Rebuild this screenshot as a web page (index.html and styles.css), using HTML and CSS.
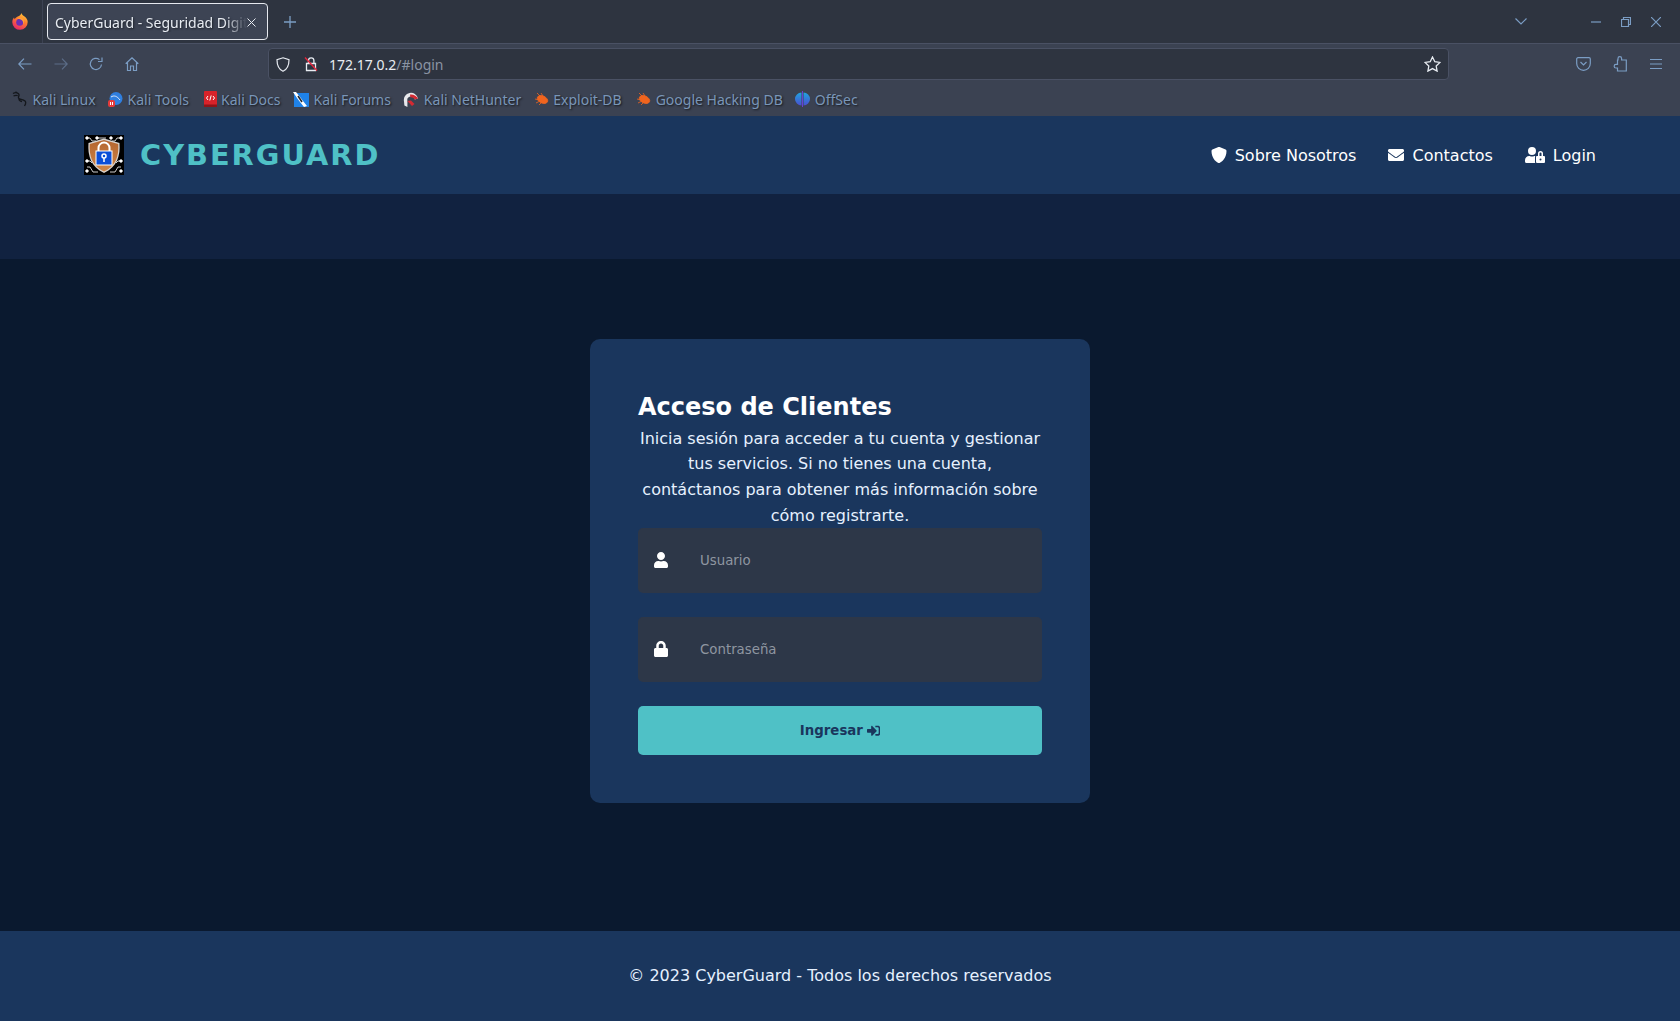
FILE: index.html
```html
<!DOCTYPE html>
<html lang="es">
<head>
  <meta charset="UTF-8">
  <title>CyberGuard - Seguridad Digital</title>
  <link rel="stylesheet" href="styles.css">
</head>
<body>
  <div class="browser">
    <div class="tabbar">
      <div class="fx-slot">
        <svg width="16" height="17" viewBox="0 0 16 17">
          <defs>
            <linearGradient id="fxbody" x1="0.8" y1="0" x2="0.3" y2="1">
              <stop offset="0" stop-color="#ffd23a"/>
              <stop offset="0.45" stop-color="#ff7a2e"/>
              <stop offset="1" stop-color="#e6246e"/>
            </linearGradient>
          </defs>
          <path d="M9.500 0c.3 1.500 1.200 2.300 2.400 3.100 2.400 1.500 3.800 3.500 3.800 6A7.700 7.700 0 0 1 .3 9.200C.3 7.300 1 5.500 2 4.500l.7 1.800c.8-1.600 2-2.500 3.700-3.100C7.800 2.600 9 1.600 9.500 0z" fill="url(#fxbody)"/>
          <circle cx="7.700" cy="9.300" r="3.500" fill="#6b2fb5"/>
          <path d="M5 5.400c2-1.200 5-.8 6.400 1.200 1 1.500.9 3.400-.2 4.800.4-2-.4-3.800-2-4.700C8 6 6.400 5.800 5 5.400z" fill="#ffa436"/>
        </svg>
      </div>
      <div class="tab">
        <span class="tab-title">CyberGuard - Seguridad Digital</span>
        <svg class="tab-close" width="9" height="9" viewBox="0 0 9 9"><path d="M.5.5l8 8M8.500.5l-8 8"/></svg>
      </div>
      <svg class="tab-new" width="12" height="12" viewBox="0 0 12 12"><path d="M6 0v12M0 6h12"/></svg>
      <div class="spacer"></div>
      <svg class="tb-ico chevron" width="12" height="7" viewBox="0 0 12 7"><path d="M.5.5L6 6 11.500.5"/></svg>
      <svg class="tb-ico win-min" width="10" height="10" viewBox="0 0 10 10"><path d="M0 5h10"/></svg>
      <svg class="tb-ico win-max" width="10" height="10" viewBox="0 0 10 10"><path d="M.5 2.500h7v7h-7zM2.500 2.500V.5h7v7h-2"/></svg>
      <svg class="tb-ico win-close" width="10" height="10" viewBox="0 0 10 10"><path d="M0 0l10 10M10 0L0 10"/></svg>
    </div>

    <div class="toolbar">
      <svg class="tb-ico nav-ico" width="14" height="12" viewBox="0 0 14 12"><path d="M13.500 6H1M6 .7L.8 6 6 11.300"/></svg>
      <svg class="tb-ico nav-ico dim" width="14" height="12" viewBox="0 0 14 12"><path d="M.5 6H13M8 .7L13.200 6 8 11.300"/></svg>
      <svg class="tb-ico nav-ico" width="14" height="14" viewBox="0 0 14 14"><path d="M12.500 7.500A5.600 5.600 0 1 1 10.500 2.600M13 .5v4H9"/></svg>
      <svg class="tb-ico nav-ico" width="14" height="14" viewBox="0 0 14 14"><path d="M.7 6.800L7 .8l6.300 6M2.500 5.500v8h3V9h3v4.500h3v-8"/></svg>
      <div class="urlbar">
        <svg class="url-shield" width="14" height="15" viewBox="0 0 14 15"><path d="M7 .8l6 2c0 5.500-1.500 9.500-6 11.500C2.500 12.300 1 8.300 1 2.800z"/></svg>
        <svg class="url-lock" width="14" height="16" viewBox="0 0 14 16">
          <path class="lock-shape" d="M4.500 7V4.500a2.700 2.700 0 0 1 5.400 0V7M2.500 7.500h9v7h-9z"/>
          <path class="lock-slash" d="M1 1.500l12 13"/>
        </svg>
        <span class="url-text">172.17.0.2<span class="url-dim">/#login</span></span>
        <svg class="url-star" width="17" height="16" viewBox="0 0 17 16"><path d="M8.500 1l2.300 4.700 5.200.7-3.800 3.600.9 5.100-4.600-2.500-4.600 2.500.9-5.100L1 6.400l5.200-.7z"/></svg>
      </div>
      <svg class="tb-ico pocket" width="15" height="14" viewBox="0 0 15 14"><path d="M2 .7h11a1.300 1.300 0 0 1 1.300 1.300v4.500a6.800 6.800 0 0 1-13.600 0V2A1.300 1.300 0 0 1 2 .7zM4.500 5l3 3 3-3"/></svg>
      <svg class="tb-ico puzzle" width="14" height="16" viewBox="0 0 14 16"><path d="M5 4V2.500a1.800 1.800 0 0 1 3.600 0V4h4.700v11H4.500v-3H3a1.800 1.800 0 0 1 0-3.700h1.500V4z"/></svg>
      <svg class="tb-ico burger" width="12" height="10" viewBox="0 0 12 10"><path d="M0 .5h12M0 5h12M0 9.500h12"/></svg>
    </div>

    <div class="bookmarks">
      <a class="bm">
        <svg width="16" height="16" viewBox="0 0 16 16"><path d="M1 2.500c2-1.200 4-1 5.500.3C8 4.200 6 5.500 6.500 7c.5 1.600 4.500 1 6.500 3 1.200 1.300.6 3.300-.5 5M1.500 5c1.500-.7 3-.8 4.200-.3M3.500.8l2 1.500M7 8c0 1.500 1.500 2.300 3 2.500" fill="none" stroke="#14171c" stroke-width="1.300"/></svg>
        Kali Linux
      </a>
      <a class="bm bm-wide">
        <svg width="15" height="15" viewBox="0 0 15 15"><circle cx="8" cy="6.500" r="6.500" fill="#2f7fe0"/><path d="M3 5c3-2 6-1 9 3" stroke="#dfeafa" fill="none"/><rect x="0" y="8" width="7" height="7" rx="2" fill="#e43a3a"/><path d="M2.500 10v3M4.500 10v3" stroke="#fff"/></svg>
        Kali Tools
      </a>
      <a class="bm">
        <svg width="13" height="16" viewBox="0 0 13 16"><rect width="13" height="16" rx="1" fill="#d8232a"/><rect x="0" y="13.500" width="13" height="2.500" fill="#8f1418"/><path d="M4 5L2.500 7 4 9M9 5l1.500 2L9 9M7.200 4.500L5.800 9.500" stroke="#fff" fill="none"/></svg>
        Kali Docs
      </a>
      <a class="bm">
        <svg width="16" height="15" viewBox="0 0 16 15"><rect x="1" y="1" width="15" height="14" fill="#1f82e8"/><path d="M0 0l3 0 4 5 3 4 4 5-3 1-4-5-3-4z" fill="#fff"/><path d="M5 4l4 6" stroke="#20242c" stroke-width="1.500"/></svg>
        Kali Forums
      </a>
      <a class="bm">
        <svg width="16" height="15" viewBox="0 0 16 15"><path d="M1 9.500a7 7 0 0 1 14-3l-3.200 1a3.700 3.700 0 0 0-7.400 1.500V15l-3-1.500z" fill="#e8e8ec"/><path d="M7 2.500c3.300-.5 6.700 1.300 8 4l-3.200 1c-1-1.400-2.500-2.300-4.500-2.200z" fill="#d42a32"/><path d="M4.400 9l4.600 5 2.500-2-3.500-3.500z" fill="#d42a32"/></svg>
        Kali NetHunter
      </a>
      <a class="bm bm-wide">
        <svg width="15" height="14" viewBox="0 0 15 14"><g class="bug"><ellipse cx="8.500" cy="7.500" rx="5.500" ry="3.500" transform="rotate(25 8.500 7.500)"/><path d="M1 7l4 1M3 1l4 4M7 1l2 3M2 11l4-2M5 13l3-3"/></g></svg>
        Exploit-DB
      </a>
      <a class="bm">
        <svg width="15" height="14" viewBox="0 0 15 14"><g class="bug"><ellipse cx="8.500" cy="7.500" rx="5.500" ry="3.500" transform="rotate(25 8.500 7.500)"/><path d="M1 7l4 1M3 1l4 4M7 1l2 3M2 11l4-2M5 13l3-3"/></g></svg>
        Google Hacking DB
      </a>
      <a class="bm">
        <svg width="15" height="16" viewBox="0 0 15 16"><defs><linearGradient id="offsec" x1="0" y1="0" x2="0" y2="1"><stop offset="0" stop-color="#1fa4e0"/><stop offset="1" stop-color="#4a4fd0"/></linearGradient></defs><path d="M6.500 1.500a6.500 6.500 0 0 0 0 13zM8.500 1.500a6.500 6.500 0 0 1 0 13z" fill="url(#offsec)"/><rect x="7" y="0" width="1" height="16" fill="#6a3fd0"/></svg>
        OffSec
      </a>
    </div>
  </div>

  <header class="site-header">
    <div class="brand">
      <svg class="brand-logo" width="40" height="40" viewBox="0 0 40 40">
        <defs>
          <linearGradient id="shieldfill" x1="0" y1="0" x2="0" y2="1">
            <stop offset="0" stop-color="#b4652f"/>
            <stop offset="1" stop-color="#cf8748"/>
          </linearGradient>
        </defs>
        <rect width="40" height="40" fill="#000"/>
        <g class="circuit">
          <path d="M3 3h3l2 3h4M14 3h8M28 6h3l2-3h4M3 26h3l2 2M3 32h3l3 5h5M37 26h-3l-2 2M37 32h-3l-3 5h-5"/>
          <circle cx="3" cy="3" r="1.300"/><circle cx="13" cy="3" r="1.300"/><circle cx="27" cy="3" r="1.300"/><circle cx="37" cy="3" r="1.300"/>
          <circle cx="3" cy="26" r="1.300"/><circle cx="37" cy="26" r="1.300"/>
          <circle cx="3" cy="36" r="1.300"/><circle cx="37" cy="36" r="1.300"/>
        </g>
        <path class="shield-edge" d="M20 3.500l15.500 4.500c1 13-2.500 24-15.500 30C7 32 3.500 21 4.500 8z"/>
        <path d="M20 5l14.200 4c.8 12-2.200 22-14.200 27.500C8 31 5 21 5.800 9z" fill="url(#shieldfill)"/>
        <path class="shackle" d="M14.500 17v-4a5.500 5.500 0 0 1 11 0v4"/>
        <rect x="12" y="16" width="16" height="14" fill="#0b4fd8" stroke="#fff"/>
        <circle cx="20" cy="21" r="2" fill="none" stroke="#fff" stroke-width="1.500"/>
        <path d="M20 23v4" stroke="#fff" stroke-width="1.500"/>
      </svg>
      <span class="brand-name">CYBERGUARD</span>
    </div>
    <nav class="site-nav">
      <a class="nav-link">
        <svg class="fa" width="16" height="16" viewBox="0 0 512 512"><path d="M466.500 83.700l-192-80a48.150 48.150 0 0 0-36.900 0l-192 80C27.700 91.100 16 108.600 16 128c0 198.500 114.500 335.700 221.500 380.300 11.800 4.900 25.100 4.900 36.900 0C360.100 472.600 496 349.300 496 128c0-19.400-11.700-36.900-29.500-44.300z"/></svg>
        Sobre Nosotros
      </a>
      <a class="nav-link">
        <svg class="fa" width="16" height="16" viewBox="0 0 512 512"><path d="M502.300 190.800c3.900-3.100 9.700-.2 9.700 4.700V400c0 26.500-21.500 48-48 48H48c-26.500 0-48-21.500-48-48V195.600c0-5 5.700-7.800 9.700-4.700 22.400 17.400 52.100 39.500 154.100 113.600 21.100 15.400 56.700 47.800 92.200 47.600 35.700.3 72-32.800 92.300-47.600 102-74.100 131.600-96.300 154-113.700zM256 320c23.200.4 56.600-29.200 73.400-41.400 132.700-96.300 142.800-104.700 173.400-128.700 5.800-4.500 9.200-11.500 9.200-18.900v-19c0-26.500-21.500-48-48-48H48C21.500 64 0 85.500 0 112v19c0 7.400 3.400 14.300 9.200 18.900 30.600 23.900 40.700 32.400 173.400 128.700 16.800 12.200 50.200 41.800 73.400 41.400z"/></svg>
        Contactos
      </a>
      <a class="nav-link">
        <svg class="fa" width="20" height="16" viewBox="0 0 640 512"><path d="M224 256A128 128 0 1 0 96 128a128 128 0 0 0 128 128zm96 64a63.080 63.080 0 0 1 8.100-30.500c-4.800-.5-9.500-1.500-14.500-1.500h-16.700a174.080 174.080 0 0 1-145.800 0h-16.700A134.430 134.430 0 0 0 0 422.400V464a48 48 0 0 0 48 48h280.900a63.540 63.540 0 0 1-8.900-32zm288-32h-32v-80a80 80 0 0 0-160 0v80h-32a32 32 0 0 0-32 32v160a32 32 0 0 0 32 32h224a32 32 0 0 0 32-32V320a32 32 0 0 0-32-32zM496 432a32 32 0 1 1 32-32 32 32 0 0 1-32 32zm32-144h-64v-80a32 32 0 0 1 64 0z"/></svg>
        Login
      </a>
    </nav>
  </header>

  <div class="band"></div>

  <main class="login-page">
    <section class="login-card">
      <h2>Acceso de Clientes</h2>
      <p>Inicia sesión para acceder a tu cuenta y gestionar tus servicios. Si no tienes una cuenta, contáctanos para obtener más información sobre cómo registrarte.</p>
      <form class="login-form">
        <div class="field">
          <svg class="fa" width="14" height="16" viewBox="0 0 448 512"><path d="M224 256c70.700 0 128-57.300 128-128S294.700 0 224 0 96 57.300 96 128s57.300 128 128 128zm89.600 32h-16.700c-22.200 10.200-46.900 16-72.900 16s-50.600-5.800-72.900-16h-16.700C60.200 288 0 348.200 0 422.400V464c0 26.500 21.500 48 48 48h352c26.500 0 48-21.500 48-48v-41.600c0-74.200-60.200-134.400-134.400-134.400z"/></svg>
          <input type="text" placeholder="Usuario">
        </div>
        <div class="field">
          <svg class="fa" width="14" height="16" viewBox="0 0 448 512"><path d="M400 224h-24v-72C376 68.200 307.800 0 224 0S72 68.200 72 152v72H48c-26.500 0-48 21.500-48 48v192c0 26.500 21.500 48 48 48h352c26.500 0 48-21.500 48-48V272c0-26.500-21.500-48-48-48zm-104 0H152v-72c0-39.700 32.300-72 72-72s72 32.300 72 72v72z"/></svg>
          <input type="password" placeholder="Contraseña">
        </div>
        <button type="button" class="submit">
          Ingresar
          <svg class="fa" width="14" height="14" viewBox="0 0 512 512"><path d="M416 448h-84c-6.600 0-12-5.400-12-12v-40c0-6.600 5.400-12 12-12h84c17.700 0 32-14.300 32-32V160c0-17.700-14.300-32-32-32h-84c-6.600 0-12-5.400-12-12V76c0-6.600 5.400-12 12-12h84c53 0 96 43 96 96v192c0 53-43 96-96 96zm-47-201L201 79c-15-15-41-4.500-41 17v96H24c-13.300 0-24 10.700-24 24v96c0 13.300 10.700 24 24 24h136v96c0 21.500 26 32 41 17l168-168c9.300-9.400 9.300-24.600 0-34z"/></svg>
        </button>
      </form>
    </section>
  </main>

  <footer class="site-footer">© 2023 CyberGuard - Todos los derechos reservados</footer>
</body>
</html>
```

FILE: styles.css
```css
* {
  box-sizing: border-box;
}
html, body {
  height: 100%;
}
body {
  margin: 0;
  display: flex;
  flex-direction: column;
  background: #0a192f;
  color: #e6f1ff;
  font-family: "DejaVu Sans", sans-serif;
  overflow: hidden;
}

/* browser chrome */
.browser {
  flex: none;
  font-family: "Noto Sans", sans-serif;
  font-size: 14px;
}
.tabbar {
  height: 44px;
  display: flex;
  align-items: center;
  background: #2e3440;
  border-bottom: 1px solid #4a5164;
}
.fx-slot {
  width: 43px;
  height: 43px;
  flex: none;
  display: flex;
  align-items: center;
  padding-left: 12px;
  border-right: 1px solid #3d4353;
}
.tab {
  width: 221px;
  height: 37px;
  margin-left: 4px;
  padding: 1px 11px 0 7px;
  display: flex;
  align-items: center;
  background: #3d4454;
  border: 1px solid #e6e9ef;
  border-radius: 4px;
  color: #e8ecf2;
}
.tab-title {
  flex: 1;
  overflow: hidden;
  white-space: nowrap;
  text-shadow: 1px 1px 2px #1c2028;
  -webkit-mask-image: linear-gradient(to right, #000 88%, transparent);
  mask-image: linear-gradient(to right, #000 88%, transparent);
}
.tab-close {
  flex: none;
  fill: none;
  stroke: #e8ecf2;
}
.tab-new {
  margin-left: 16px;
  fill: none;
  stroke: #7b9dc4;
  stroke-width: 1.3;
}
.spacer {
  flex: 1;
}
.tb-ico {
  flex: none;
  fill: none;
  stroke: #7b9dc4;
  stroke-width: 1.2;
}
.chevron {
  margin-right: 64px;
}
.win-max {
  margin: 0 20px;
}
.win-close {
  margin-right: 19px;
}
.toolbar {
  height: 40px;
  display: flex;
  align-items: center;
  padding-left: 18px;
  background: #3b4252;
}
.nav-ico {
  margin-right: 21.5px;
}
.nav-ico.dim {
  stroke: #5c6d88;
}
.urlbar {
  width: 1181px;
  height: 32px;
  margin-left: 108px;
  display: flex;
  align-items: center;
  padding: 0 7px;
  background: #2e3440;
  border: 1px solid #4a5164;
  border-radius: 4px;
  color: #e8ecf2;
}
.url-shield {
  flex: none;
  fill: none;
  stroke: #e8ecf2;
  stroke-width: 1.2;
}
.url-lock {
  flex: none;
  margin-left: 14px;
  fill: none;
}
.lock-shape {
  stroke: #e8ecf2;
  stroke-width: 1.3;
}
.lock-slash {
  stroke: #e5263c;
  stroke-width: 1.4;
}
.url-text {
  flex: 1;
  margin-left: 11px;
}
.url-dim {
  color: #8a93a3;
}
.url-star {
  flex: none;
  fill: none;
  stroke: #e8ecf2;
  stroke-width: 1.3;
}
.pocket {
  margin-left: 127px;
}
.puzzle {
  margin-left: 22px;
}
.burger {
  margin-left: 23px;
}
.bookmarks {
  height: 32px;
  padding: 0 0 2px 12px;
  display: flex;
  align-items: center;
  gap: 12.5px;
  background: #3b4252;
  color: #7a96b8;
  font-size: 14px;
  text-shadow: 1px 1px 2px #15181e;
}
.bm {
  display: flex;
  align-items: center;
  gap: 4.5px;
  white-space: nowrap;
}
.bm svg {
  flex: none;
}
.bm-wide {
  margin-right: 2px;
}
.bug {
  fill: #f0641e;
  stroke: #f0641e;
  stroke-width: .8;
}

/* site */
.site-header {
  flex: none;
  height: 78px;
  padding: 0 84px;
  display: flex;
  align-items: center;
  justify-content: space-between;
  background: #1a365d;
}
.brand {
  display: flex;
  align-items: center;
  gap: 16px;
}
.brand-logo {
  display: block;
}
.circuit {
  fill: #fff;
  stroke: #fff;
  stroke-width: .8;
}
.circuit path {
  fill: none;
}
.shield-edge {
  fill: #d8d4d0;
}
.shackle {
  fill: none;
  stroke: #fff;
  stroke-width: 2;
}
.brand-name {
  color: #4fc1c6;
  font-size: 28.8px;
  font-weight: 700;
  letter-spacing: 2px;
}
.site-nav {
  display: flex;
  gap: 32px;
}
.nav-link {
  display: flex;
  align-items: center;
  gap: 8px;
  font-size: 16px;
  color: #fff;
}
.fa {
  flex: none;
  fill: currentColor;
}
.band {
  flex: none;
  height: 65px;
  background: #112240;
}
.login-page {
  flex: 1;
  padding-top: 80px;
}
.login-card {
  width: 500px;
  margin: 0 auto;
  padding: 48px;
  background: #1a365d;
  border-radius: 10px;
}
.login-card h2 {
  margin: 0;
  padding-top: 2px;
  font-size: 24px;
  line-height: 36.8px;
  color: #fff;
}
.login-card p {
  margin: 0;
  font-size: 16px;
  line-height: 25.6px;
  text-align: center;
}
.field {
  height: 65px;
  margin-bottom: 24px;
  padding-left: 16px;
  display: flex;
  align-items: center;
  gap: 30px;
  background: #2d3748;
  border-radius: 5px;
  color: #fff;
}
.field .fa {
  margin-bottom: 1px;
}
.field input {
  flex: 1;
  min-width: 0;
  height: 100%;
  border: 0;
  outline: 0;
  background: transparent;
  color: #fff;
  font-family: inherit;
  font-size: 13.33px;
}
.field input::placeholder {
  color: #8f96a1;
  opacity: 1;
}
.submit {
  width: 100%;
  height: 49px;
  display: flex;
  align-items: center;
  justify-content: center;
  gap: 4px;
  border: 0;
  border-radius: 5px;
  background: #4fc1c6;
  color: #1a365d;
  font-family: inherit;
  font-size: 13.33px;
  font-weight: 700;
}
.submit .fa {
  width: 13.33px;
  height: 13.33px;
}
.site-footer {
  flex: none;
  height: 90px;
  padding-bottom: 2px;
  display: flex;
  align-items: center;
  justify-content: center;
  background: #1a365d;
  font-size: 16px;
}
```
